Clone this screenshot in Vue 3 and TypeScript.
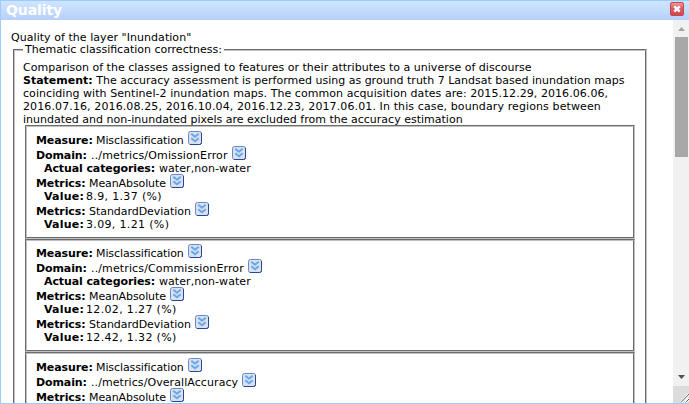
<script setup lang="ts">
interface Row {
  label: string
  value: string
  expandable?: boolean
  kind: string
  tracking: number
}

interface TextLine {
  text: string
  tracking: number
}

function heading(domain: string, tracking: number): Row[] {
  return [
    { label: 'Measure:', value: 'Misclassification', expandable: true, kind: 'measure', tracking: -0.1 },
    { label: 'Domain:', value: '../metrics/' + domain, expandable: true, kind: 'domain', tracking },
  ]
}

const categories: Row = { label: 'Actual categories:', value: 'water,non-water', kind: 'nested', tracking: 0.06 }
const mean: Row = { label: 'Metrics:', value: 'MeanAbsolute', expandable: true, kind: 'metrics', tracking: -0.1 }
const deviation: Row = { label: 'Metrics:', value: 'StandardDeviation', expandable: true, kind: 'metrics', tracking: -0.05 }

function result(value: string): Row {
  return { label: 'Value:', value, kind: 'nested value', tracking: 0.34 }
}

const measures: Row[][] = [
  [...heading('OmissionError', 0.15), categories, mean, result('8.9, 1.37 (%)'), deviation, result('3.09, 1.21 (%)')],
  [...heading('CommissionError', 0.13), categories, mean, result('12.02, 1.27 (%)'), deviation, result('12.42, 1.32 (%)')],
  [...heading('OverallAccuracy', 0.08), mean],
]

const statement: TextLine[] = [
  { text: 'coinciding with Sentinel-2 inundation maps. The common acquisition dates are: 2015.12.29, 2016.06.06,', tracking: 0.06 },
  { text: '2016.07.16, 2016.08.25, 2016.10.04, 2016.12.23, 2017.06.01. In this case, boundary regions between', tracking: 0.112 },
  { text: 'inundated and non-inundated pixels are excluded from the accuracy estimation', tracking: 0.005 },
]
</script>

<template>
  <div class="window">
    <header class="titlebar">
      <span class="title">Quality</span>
      <svg class="close" width="14" height="14" viewBox="0 0 14 14">
        <defs>
          <linearGradient id="closeFill" x1="0" y1="0" x2="0" y2="1">
            <stop offset="0" stop-color="#f0a0a0" />
            <stop offset=".45" stop-color="#dd5a60" />
            <stop offset="1" stop-color="#d5434a" />
          </linearGradient>
        </defs>
        <rect x=".5" y=".5" width="13" height="13" rx="1.5" fill="url(#closeFill)" stroke="#bd4a52" />
        <path d="M4.3 4.3 9.7 9.7M9.7 4.3 4.3 9.7" stroke="#fff" stroke-width="2.5" />
      </svg>
    </header>
    <div class="body">
      <main class="content">
        <p class="line intro">Quality of the layer "Inundation"</p>
        <section class="group">
          <h2 class="legend line">Thematic classification correctness:</h2>
          <div class="description">
            <p class="line first">Comparison of the classes assigned to features or their attributes to a universe of discourse</p>
            <p class="line"><b>Statement:</b> The accuracy assessment is performed using as ground truth 7 Landsat based inundation maps</p>
            <p v-for="item in statement" :key="item.text" class="line" :style="{ letterSpacing: item.tracking + 'px' }">{{ item.text }}</p>
          </div>
          <div class="measures">
            <article v-for="(measure, m) in measures" :key="m" class="measure-box">
              <p v-for="(row, r) in measure" :key="r" class="line row" :class="[row.kind, { tall: row.expandable }]">
                <b class="label">{{ row.label }}</b>
                <span :style="{ letterSpacing: row.tracking + 'px' }">{{ row.value }}</span>
                <svg v-if="row.expandable" class="expand" width="14" height="14" viewBox="0 0 14 14">
                  <rect x=".5" y=".5" width="13" height="13" rx="2" fill="#dce0e8" stroke="#6689cd" />
                  <path d="M13.5 2V11.5Q13.5 13.5 11.5 13.5H2" fill="none" stroke="#25479b" />
                  <path d="M3.3 2.8 7 5.8 10.7 2.8M3.3 7.3 7 10.3 10.7 7.3" fill="none" stroke="#62a9f0" stroke-width="2" />
                </svg>
              </p>
            </article>
          </div>
        </section>
      </main>
      <aside class="scroll">
        <svg class="arrow" width="16" height="17" viewBox="0 0 16 17"><path d="M5 11 8.5 7 12 11Z" fill="#a3a3a3" /></svg>
        <div class="thumb"></div>
        <svg class="arrow down" width="16" height="17" viewBox="0 0 16 17"><path d="M5 6H12L8.5 10Z" fill="#505050" /></svg>
        <svg class="grip" width="16" height="17" viewBox="0 0 16 17">
          <path d="M8 17 16 8M12 17 16 12.5" stroke="#fff" stroke-width="2.5" />
          <path d="M8 16.5 16 8M12.5 16.5 16 13" stroke="#606060" />
        </svg>
      </aside>
    </div>
  </div>
</template>

<style>
body {
  margin: 0;
  overflow: hidden;
}
</style>

<style scoped>
.window {
  box-sizing: border-box;
  width: 689px;
  height: 404px;
  overflow: hidden;
  display: flex;
  flex-direction: column;
  border: solid #99ccff;
  border-width: 1px 0 1px 1px;
  background: #fff;
  color: #000;
  font: 11px/13px Verdana, "DejaVu Sans", sans-serif;
}
.titlebar {
  box-sizing: border-box;
  height: 19px;
  flex: none;
  display: flex;
  justify-content: space-between;
  padding: 1px 5px 0;
  background: linear-gradient(#cfe5ff, #b7d0fa);
}
.title {
  color: #fff;
  font-size: 14px;
  line-height: 16px;
  font-weight: bold;
  letter-spacing: -0.1px;
}
.body {
  flex: 1;
  min-height: 0;
  display: flex;
}
.content {
  flex: 1;
  min-width: 0;
  overflow: hidden;
  padding: 11px 26px 0 10px;
}
.line {
  height: 13px;
  margin: 0;
  white-space: nowrap;
}
.intro {
  letter-spacing: 0.05px;
}
.first {
  letter-spacing: 0.01px;
}
.group {
  height: 500px;
  margin: 5px 0 0 2px;
  box-sizing: border-box;
  border: 2px groove #c0c0c0;
}
.legend {
  width: fit-content;
  margin: -8px 0 0 8px;
  padding: 0 2px;
  background: #fff;
  font-size: 11px;
  font-weight: normal;
}
.description {
  margin: 5px 0 0 8px;
}
.measures {
  margin: -1px 10px 0;
}
.measure-box {
  box-sizing: border-box;
  height: 114px;
  border: 2px groove #c0c0c0;
  padding: 5px 9px 0;
}
.measure-box:nth-child(2) {
  height: 113px;
  padding-top: 4px;
}
.row {
  display: flex;
}
.line.tall {
  height: 15px;
  line-height: 17px;
}
.label {
  flex: none;
  letter-spacing: -0.1px;
}
.measure .label {
  width: 60px;
}
.domain .label {
  width: 55px;
}
.metrics .label {
  width: 53px;
}
.nested {
  padding-left: 8px;
}
.nested .label {
  width: 115px;
}
.nested.value .label {
  width: 42px;
  letter-spacing: 0.2px;
}
.expand {
  flex: none;
  margin: -1px 0 0 4px;
}
.scroll {
  width: 16px;
  flex: none;
  display: flex;
  flex-direction: column;
  background: #f1f1f1;
}
.arrow {
  flex: none;
}
.thumb {
  width: 13px;
  height: 120px;
  margin-left: 2px;
  background: #a8a8a8;
}
.down {
  margin-top: auto;
}
.grip {
  flex: none;
  background: #dcdcdc;
}
</style>
